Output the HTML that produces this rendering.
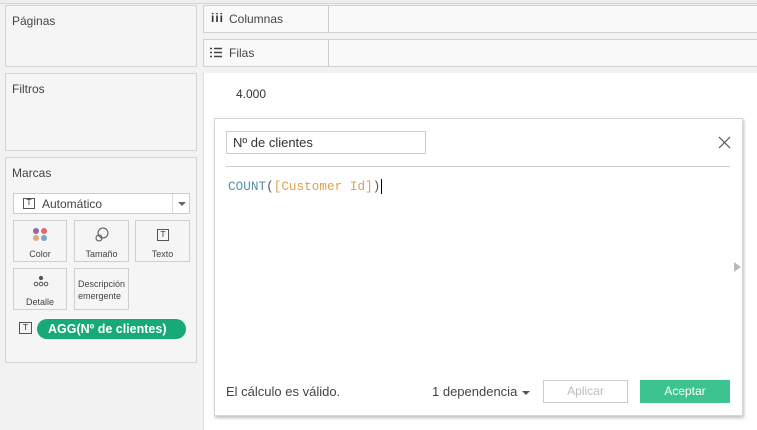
<!DOCTYPE html>
<html><head><meta charset="utf-8"><style>
*{box-sizing:border-box;margin:0;padding:0}
body{width:757px;height:430px;background:#f2f2f2;font-family:"Liberation Sans",sans-serif;color:#333;position:relative;overflow:hidden;font-size:12px}
.a{position:absolute}
.panel{position:absolute;background:#f5f5f5;border:1px solid #d4d4d4}
.lbl{position:absolute;font-size:12px;color:#444}
.btn{position:absolute;background:#f5f5f5;border:1px solid #cfcfcf;font-size:9px;color:#444;text-align:center}
.shelf{position:absolute;left:203px;right:-2px;height:28px;background:#f9f9f9;border:1px solid #d0d0d0}
.mono{font-family:"Liberation Mono",monospace;font-size:12.7px}
.tb{position:absolute;border:1px solid #555;display:flex;align-items:center;justify-content:center;font-family:"Liberation Mono",monospace;font-size:9px;color:#444;line-height:1}
</style></head><body>
<div class="a" style="left:0;top:0;width:757px;height:4px;background:#eee;border-bottom:1px solid #d4d4d4"></div>
<div class="panel" style="left:5px;top:5px;width:192px;height:62px"><div class="lbl" style="left:6px;top:8px">Páginas</div></div>
<div class="panel" style="left:5px;top:73px;width:192px;height:78px"><div class="lbl" style="left:6px;top:8px">Filtros</div></div>
<div class="panel" style="left:5px;top:157px;width:192px;height:206px"><div class="lbl" style="left:6px;top:8px">Marcas</div></div>
<div class="a" style="left:13px;top:193px;width:177px;height:21px;background:#fff;border:1px solid #ccc">
 <div class="tb" style="left:9px;top:4px;width:12px;height:11px">T</div>
 <div class="a" style="left:28px;top:3px;font-size:12px;color:#444">Automático</div>
 <div class="a" style="left:158px;top:0;width:1px;height:19px;background:#ddd"></div>
 <div class="a" style="left:164px;top:8px;border:4px solid transparent;border-top:4px solid #666;border-bottom:0"></div>
</div>
<div class="btn" style="left:13px;top:220px;width:54px;height:42px">
 <svg class="a" style="left:18px;top:6px" width="16" height="16"><circle cx="4" cy="4" r="3" fill="#8e6a9e"/><circle cx="12" cy="4" r="3" fill="#e8636d"/><circle cx="4" cy="11" r="3" fill="#e0a77a"/><circle cx="12" cy="11" r="3" fill="#7fa2c8"/></svg>
 <div class="a" style="left:0;right:0;top:28px">Color</div></div>
<div class="btn" style="left:74px;top:220px;width:55px;height:42px">
 <svg class="a" style="left:19px;top:5px" width="16" height="16" fill="none" stroke="#555"><circle cx="9" cy="7" r="5"/><circle cx="5" cy="12" r="3"/></svg>
 <div class="a" style="left:0;right:0;top:28px">Tamaño</div></div>
<div class="btn" style="left:135px;top:220px;width:55px;height:42px">
 <div class="tb" style="left:21px;top:8px;width:12px;height:12px">T</div>
 <div class="a" style="left:0;right:0;top:28px">Texto</div></div>
<div class="btn" style="left:13px;top:268px;width:54px;height:42px">
 <svg class="a" style="left:18px;top:6px" width="18" height="12" fill="none" stroke="#555"><circle cx="9" cy="3" r="1.6" fill="#555"/><circle cx="4" cy="9" r="1.8"/><circle cx="9" cy="9" r="1.8"/><circle cx="14" cy="9" r="1.8"/></svg>
 <div class="a" style="left:0;right:0;top:28px">Detalle</div></div>
<div class="btn" style="left:74px;top:268px;width:55px;height:42px;text-align:left">
 <div class="a" style="left:3px;top:9px;line-height:12px">Descripción<br>emergente</div></div>
<div class="tb" style="left:19px;top:322px;width:13px;height:12px">T</div>
<div class="a" style="left:37px;top:319px;width:149px;height:20px;background:#18a979;border-radius:10px;color:#fff;font-size:12.5px;font-weight:bold;line-height:20px;padding-left:11px">AGG(Nº de clientes)</div>

<div class="shelf" style="top:5px"><div class="a" style="left:124px;top:0;width:1px;height:26px;background:#ccc"></div>
 <div class="a" style="left:7px;top:5px;font-weight:bold;font-size:12px;letter-spacing:1px">iii</div><div class="lbl" style="left:25px;top:6px">Columnas</div></div>
<div class="shelf" style="top:39px"><div class="a" style="left:124px;top:0;width:1px;height:26px;background:#ccc"></div>
 <svg class="a" style="left:6px;top:7px" width="12" height="11" stroke="#444" stroke-width="1.5"><line x1="0" y1="1.5" x2="2" y2="1.5"/><line x1="4" y1="1.5" x2="12" y2="1.5"/><line x1="0" y1="5.5" x2="2" y2="5.5"/><line x1="4" y1="5.5" x2="12" y2="5.5"/><line x1="0" y1="9.5" x2="2" y2="9.5"/><line x1="4" y1="9.5" x2="12" y2="9.5"/></svg>
 <div class="lbl" style="left:25px;top:6px">Filas</div></div>
<div class="a" style="left:203px;top:73px;width:554px;height:357px;background:#fff;border-left:1px solid #ddd"></div>
<div class="a" style="left:236px;top:87px;font-size:12px;color:#333">4.000</div>

<div class="a" style="left:214px;top:118px;width:529px;height:298px;background:#fff;border:1px solid #d5d5d5;box-shadow:1px 2px 3px rgba(0,0,0,.25)">
 <div class="a" style="left:11px;top:12px;width:200px;height:23px;border:1px solid #ccc;font-size:13px;padding:3px 6px;color:#333">Nº de clientes</div>
 <svg class="a" style="left:503px;top:17px" width="13" height="13" stroke="#555" stroke-width="1.2"><line x1="1" y1="1" x2="12" y2="12"/><line x1="12" y1="1" x2="1" y2="12"/></svg>
 <div class="a" style="left:11px;top:47px;width:504px;height:1px;background:#ccc"></div>
 <div class="a mono" style="left:13px;top:60px;color:#5a8fa8">COUNT<span style="color:#555">(</span><span style="color:#e0a050">[Customer Id]</span><span style="color:#555">)</span><span style="border-left:1px solid #000;margin-left:1px"></span></div>
 <div class="a" style="left:519px;top:143px;border:5px solid transparent;border-left:7px solid #bbb;border-right:0"></div>
 <div class="a" style="left:11px;top:265px;font-size:13px;color:#444">El cálculo es válido.</div>
 <div class="a" style="left:217px;top:265px;font-size:13px;color:#444">1 dependencia</div>
 <div class="a" style="left:307px;top:272px;border:4px solid transparent;border-top:4px solid #555;border-bottom:0"></div>
 <div class="a" style="left:328px;top:261px;width:85px;height:23px;border:1px solid #ccc;color:#bbb;text-align:center;line-height:21px">Aplicar</div>
 <div class="a" style="left:425px;top:261px;width:90px;height:23px;background:#3cc38f;color:#fff;text-align:center;line-height:23px">Aceptar</div>
</div>
</body></html>
